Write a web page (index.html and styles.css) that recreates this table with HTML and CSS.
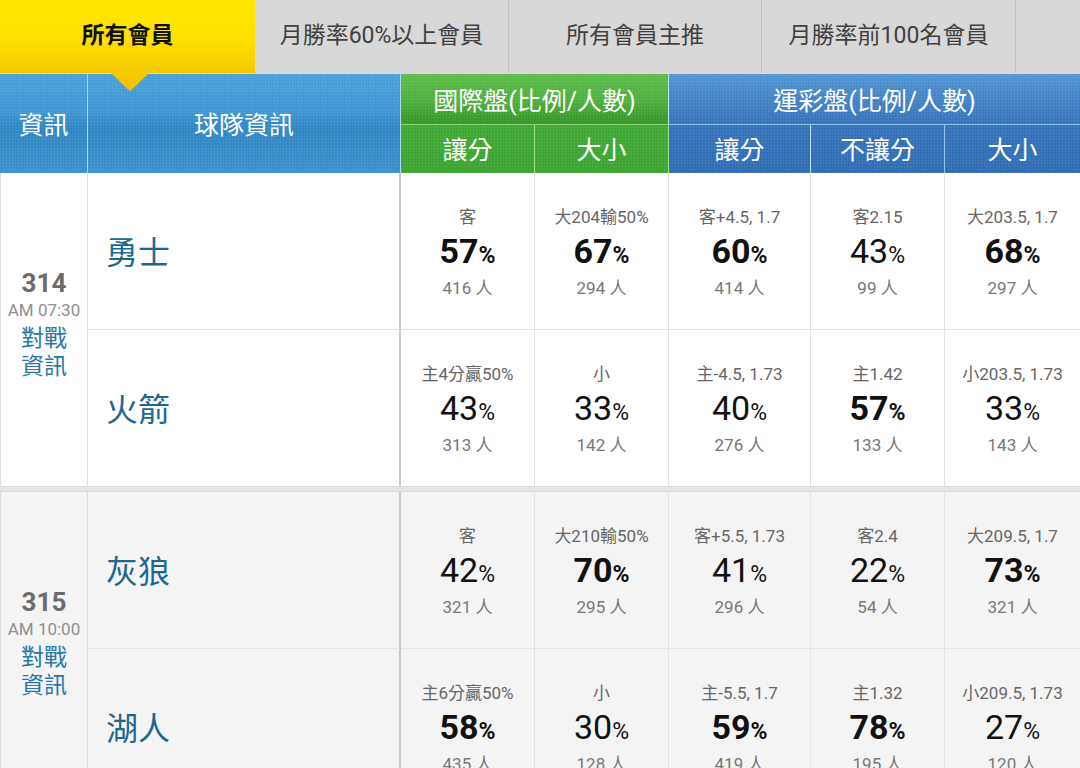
FILE: index.html
```html
<!DOCTYPE html>
<html lang="zh-Hant">
<head>
<meta charset="utf-8">
<title>會員推薦</title>
<link rel="stylesheet" href="styles.css">
</head>
<body>
<div class="page">
  <nav class="tabs">
    <div class="tab active">所有會員</div>
    <div class="tab">月勝率60%以上會員</div>
    <div class="tab">所有會員主推</div>
    <div class="tab">月勝率前100名會員</div>
    <div class="tab empty"></div>
  </nav>

  <div class="head">
    <div class="h blue span2 c-info">資訊</div>
    <div class="h blue span2 c-team">球隊資訊</div>
    <div class="h green top c-intl">國際盤(比例/人數)</div>
    <div class="h navy top c-sport">運彩盤(比例/人數)</div>
    <div class="h green sub">讓分</div>
    <div class="h green sub">大小</div>
    <div class="h navy sub">讓分</div>
    <div class="h navy sub">不讓分</div>
    <div class="h navy sub last">大小</div>
  </div>

  <div class="match">
    <div class="info">
      <div class="num">314</div>
      <div class="time">AM 07:30</div>
      <div class="link">對戰<br>資訊</div>
    </div>
    <div class="team r1">勇士</div>
    <div class="cell r1"><div class="lbl">客</div><div class="pct b">57<span>%</span></div><div class="cnt">416 人</div></div>
    <div class="cell r1"><div class="lbl">大204輸50%</div><div class="pct b">67<span>%</span></div><div class="cnt">294 人</div></div>
    <div class="cell r1"><div class="lbl">客+4.5, 1.7</div><div class="pct b">60<span>%</span></div><div class="cnt">414 人</div></div>
    <div class="cell r1"><div class="lbl">客2.15</div><div class="pct">43<span>%</span></div><div class="cnt">99 人</div></div>
    <div class="cell r1 last"><div class="lbl">大203.5, 1.7</div><div class="pct b">68<span>%</span></div><div class="cnt">297 人</div></div>

    <div class="team">火箭</div>
    <div class="cell"><div class="lbl">主4分贏50%</div><div class="pct">43<span>%</span></div><div class="cnt">313 人</div></div>
    <div class="cell"><div class="lbl">小</div><div class="pct">33<span>%</span></div><div class="cnt">142 人</div></div>
    <div class="cell"><div class="lbl">主-4.5, 1.73</div><div class="pct">40<span>%</span></div><div class="cnt">276 人</div></div>
    <div class="cell"><div class="lbl">主1.42</div><div class="pct b">57<span>%</span></div><div class="cnt">133 人</div></div>
    <div class="cell last"><div class="lbl">小203.5, 1.73</div><div class="pct">33<span>%</span></div><div class="cnt">143 人</div></div>
  </div>

  <div class="sep"></div>

  <div class="match alt">
    <div class="info">
      <div class="num">315</div>
      <div class="time">AM 10:00</div>
      <div class="link">對戰<br>資訊</div>
    </div>
    <div class="team r1">灰狼</div>
    <div class="cell r1"><div class="lbl">客</div><div class="pct">42<span>%</span></div><div class="cnt">321 人</div></div>
    <div class="cell r1"><div class="lbl">大210輸50%</div><div class="pct b">70<span>%</span></div><div class="cnt">295 人</div></div>
    <div class="cell r1"><div class="lbl">客+5.5, 1.73</div><div class="pct">41<span>%</span></div><div class="cnt">296 人</div></div>
    <div class="cell r1"><div class="lbl">客2.4</div><div class="pct">22<span>%</span></div><div class="cnt">54 人</div></div>
    <div class="cell r1 last"><div class="lbl">大209.5, 1.7</div><div class="pct b">73<span>%</span></div><div class="cnt">321 人</div></div>

    <div class="team">湖人</div>
    <div class="cell"><div class="lbl">主6分贏50%</div><div class="pct b">58<span>%</span></div><div class="cnt">435 人</div></div>
    <div class="cell"><div class="lbl">小</div><div class="pct">30<span>%</span></div><div class="cnt">128 人</div></div>
    <div class="cell"><div class="lbl">主-5.5, 1.7</div><div class="pct b">59<span>%</span></div><div class="cnt">419 人</div></div>
    <div class="cell"><div class="lbl">主1.32</div><div class="pct b">78<span>%</span></div><div class="cnt">195 人</div></div>
    <div class="cell last"><div class="lbl">小209.5, 1.73</div><div class="pct">27<span>%</span></div><div class="cnt">120 人</div></div>
  </div>
</div>
</body>
</html>
```

FILE: styles.css
```css
* { box-sizing: border-box; }

html, body {
  margin: 0;
  padding: 0;
  background: #ffffff;
}

body {
  font-family: Roboto, "Noto Sans CJK TC", "Noto Sans", sans-serif;
  width: 1080px;
  height: 768px;
  overflow: hidden;
}

.page {
  width: 1080px;
}

/* ---------- tabs ---------- */
.tabs {
  display: grid;
  grid-template-columns: 255px 254px 253px 254px 1fr;
  height: 73px;
  background: #d8d8d8;
}

.tab {
  display: flex;
  align-items: center;
  justify-content: center;
  font-size: 23px;
  line-height: 30px;
  color: #404040;
  border-right: 1px solid #c2c2c2;
  padding-bottom: 2px;
}

.tab.empty { border-right: none; }

.tab.active {
  position: relative;
  background: linear-gradient(#ffe800 0%, #fde000 55%, #f6c900 100%);
  color: #111;
  font-weight: 700;
  border-right: none;
  z-index: 2;
}

.tab.active::after {
  content: "";
  position: absolute;
  left: 111px;
  top: 73px;
  width: 38px;
  height: 18px;
  background: linear-gradient(#f7cb00, #f3c200 70%, #eeb900);
  clip-path: polygon(0 0, 100% 0, 56% 90%, 50% 100%, 44% 90%);
}

/* ---------- header ---------- */
.head {
  display: grid;
  grid-template-columns: 88px 313px 134px 134px 142px 134px 135px;
  grid-template-rows: 51px 48px;
  border-top: 1px solid #bfe4f4;
  color: #ffffff;
  font-size: 25px;
  position: relative;
}

.h {
  display: flex;
  align-items: center;
  justify-content: center;
  line-height: 30px;
  border-right: 1px solid #a9d9f0;
}

.h.last { border-right: none; }

.span2 { grid-row: 1 / 3; padding-top: 4px; }
.c-intl { grid-column: 3 / 5; }
.c-sport { grid-column: 5 / 8; border-right: none; }

.h.blue {
  background-color: #3a90cd;
  background-image:
    repeating-linear-gradient(90deg, rgba(255,255,255,0.05) 0 1px, transparent 1px 3px),
    repeating-linear-gradient(0deg, rgba(255,255,255,0.05) 0 1px, transparent 1px 3px),
    linear-gradient(#48a0da 0%, #3c95d2 40%, #3189c7 50%, #2f85c3 56%, #3a8fcc 100%);
}

.h.green.top {
  background-image:
    repeating-linear-gradient(90deg, rgba(255,255,255,0.05) 0 1px, transparent 1px 3px),
    repeating-linear-gradient(0deg, rgba(255,255,255,0.05) 0 1px, transparent 1px 3px),
    linear-gradient(#5cbc4a 0%, #4cae3c 55%, #399c2c 85%, #339626 100%);
  border-bottom: 1px solid #8fd47a;
  padding-top: 5px;
}

.h.green.sub {
  border-right-color: #9fdc8c;
  background-image:
    repeating-linear-gradient(90deg, rgba(255,255,255,0.05) 0 1px, transparent 1px 3px),
    repeating-linear-gradient(0deg, rgba(255,255,255,0.05) 0 1px, transparent 1px 3px),
    linear-gradient(#3fa834 0%, #3aa22f 100%);
  padding-top: 4px;
}

.h.green.sub + .h.navy.sub,
.c-intl { border-right-color: #b7e6f2; }

.h.navy.top {
  background-image:
    repeating-linear-gradient(90deg, rgba(255,255,255,0.05) 0 1px, transparent 1px 3px),
    repeating-linear-gradient(0deg, rgba(255,255,255,0.05) 0 1px, transparent 1px 3px),
    linear-gradient(#5196d4 0%, #4585c8 40%, #3b79bf 80%, #3572b9 100%);
  border-bottom: 1px solid #8cc4ea;
  padding-top: 5px;
}

.h.navy.sub {
  border-right-color: #8fc3e8;
  background-image:
    repeating-linear-gradient(90deg, rgba(255,255,255,0.05) 0 1px, transparent 1px 3px),
    repeating-linear-gradient(0deg, rgba(255,255,255,0.05) 0 1px, transparent 1px 3px),
    linear-gradient(#3472bb 0%, #2e6bb3 100%);
  padding-top: 4px;
}

/* ---------- body ---------- */
.match {
  display: grid;
  grid-template-columns: 88px 313px 134px 134px 142px 134px 135px;
  grid-template-rows: 157px 156px;
  background: #ffffff;
  border-bottom: 1px solid #dcdcdc;
}

.match.alt { background: #f4f4f4; }

.sep {
  height: 5px;
  background: #e6e6e6;
  border-bottom: 1px solid #dadada;
}

.info {
  grid-row: 1 / 3;
  grid-column: 1;
  display: flex;
  flex-direction: column;
  align-items: center;
  justify-content: center;
  border-left: 1px solid #dcdcdc;
  border-right: 1px solid #dcdcdc;
  padding-bottom: 10px;
  text-align: center;
}

.num {
  font-size: 26px;
  line-height: 30px;
  font-weight: 700;
  color: #6b6b6b;
}

.time {
  font-size: 17px;
  line-height: 24px;
  color: #8f8f8f;
}

.link {
  font-size: 23px;
  line-height: 28px;
  margin-top: 3px;
  color: #2a78a6;
}

.team {
  grid-column: 2;
  display: flex;
  align-items: center;
  padding-left: 18px;
  padding-top: 4px;
  font-size: 32px;
  line-height: 40px;
  color: #1d6892;
  border-right: 2px solid #cacaca;
}

.r1 { border-bottom: 1px solid #e3e3e3; }

.cell {
  display: flex;
  flex-direction: column;
  align-items: center;
  justify-content: center;
  padding-top: 2px;
  border-right: 1px solid #e2e2e2;
  white-space: nowrap;
}

.cell.last { border-right: none; }

.lbl {
  font-size: 17px;
  line-height: 26px;
  color: #666666;
}

.pct {
  font-size: 34px;
  line-height: 46px;
  margin: -2px 0 2px;
  color: #111111;
}

.pct span {
  font-size: 23px;
  line-height: 0;
}

.pct.b { font-weight: 700; }

.cnt {
  font-size: 17px;
  line-height: 24px;
  color: #777777;
}
```
